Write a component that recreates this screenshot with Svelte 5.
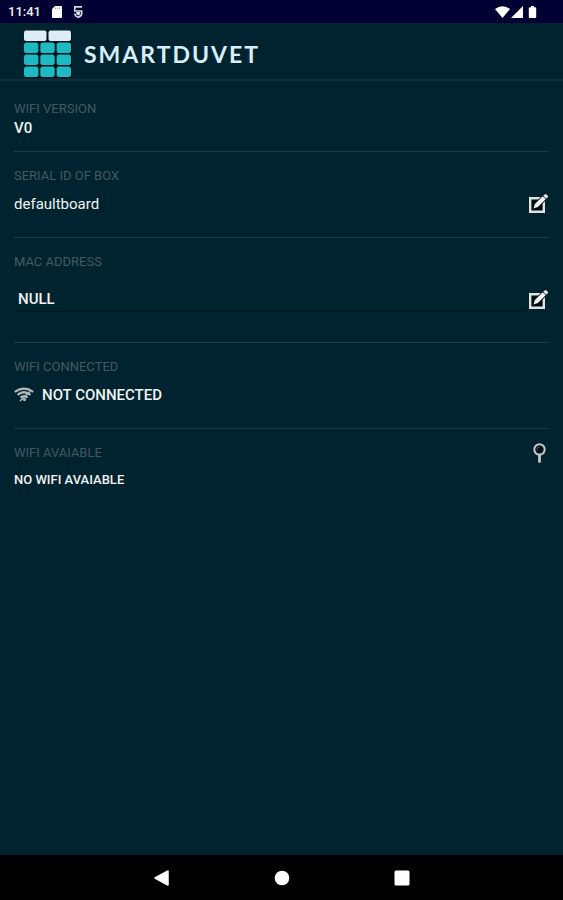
<script>
  let serial = $state('defaultboard');
  let mac = $state('NULL');
  const tiles = [0, 1, 2].flatMap((r) => [0, 1, 2].map((c) => ({ x: c * 16.3, y: 12.5 + r * 12 })));
</script>

{#snippet pencil()}
  <svg width="22" height="22" viewBox="0 0 22 22" aria-hidden="true">
    <path d="M2 4h16v16H2z" fill="#000c12" />
    <path d="M3.2 5.2h13.6v13.6H3.2z" fill="none" stroke="#e4e0e4" stroke-width="2.4" />
    <path d="M5.5 16.5l1.400-5.600 8.600-8.600 4.200 4.200-8.600 8.600z" fill="#000c12" />
    <path d="M6.500 15.500l1.400-4.400 7.800-7.800 3 3-7.800 7.800z" fill="#f2f0f2" />
    <path d="M16.200 2.800l1.400-1.400a1.400 1.400 0 0 1 2 0l1 1a1.400 1.400 0 0 1 0 2l-1.400 1.400z" fill="#e0dee2" />
  </svg>
{/snippet}

<div class="screen">
  <div class="status">
    <div class="group">
      <time>11:41</time>
      <svg width="10" height="12" viewBox="0 0 10 12" aria-hidden="true">
        <path d="M3 0h6a1 1 0 0 1 1 1v10a1 1 0 0 1-1 1H1a1 1 0 0 1-1-1V3z" fill="#fff" />
        <path d="M3.500 1.500v1.500M5.500 1.500v1.500M7.500 1.500v1.500" stroke="#8a8aa0" stroke-width=".8" />
      </svg>
      <svg width="10" height="12" viewBox="0 0 10 12" aria-hidden="true">
        <path d="M9 .9H1.800V5H8.700V8Q8.300 10.300 5.200 11.200 2 10.300 1.700 7.500" fill="none" stroke="#d8d8e4" stroke-width="1.600" />
        <path d="M3.200 6h4v2.200L5.200 9.600 3.200 8.200z" fill="#d8d8e4" />
      </svg>
    </div>
    <svg width="44" height="14" viewBox="0 0 44 14" aria-hidden="true">
      <path d="M0 4Q7.500-1.500 15 4L7.500 13z" fill="#fff" />
      <path d="M28 1v12H16z" fill="#fff" />
      <path d="M36 1h3v1.200h1.200a1 1 0 0 1 1 1V12a1 1 0 0 1-1 1h-5.400a1 1 0 0 1-1-1V3.200a1 1 0 0 1 1-1H36z" fill="#fff" />
    </svg>
  </div>

  <header>
    <svg width="48" height="48" viewBox="0 0 48 48" aria-hidden="true">
      <rect width="48" height="48" rx="3" fill="#00121a" />
      <rect x="0" y="0.500" width="22.500" height="10.500" rx="2" fill="#dcedf7" />
      <rect x="24.500" y="0.500" width="22.500" height="10.500" rx="2" fill="#dcedf7" />
      {#each tiles as t}
        <rect x={t.x} y={t.y} width="14.400" height="10.400" rx="2.500" fill="#1fb9c4" />
      {/each}
    </svg>
    <h1>SMARTDUVET</h1>
  </header>

  <main>
    <section>
      <h2>WIFI VERSION</h2>
      <div class="row version">V0</div>
    </section>
    <section>
      <h2><label for="serial">SERIAL ID OF BOX</label></h2>
      <div class="row serial">
        <input id="serial" bind:value={serial} />
        <button aria-label="Edit serial ID">{@render pencil()}</button>
      </div>
    </section>
    <section>
      <h2><label for="mac">MAC ADDRESS</label></h2>
      <div class="row mac">
        <input id="mac" class="lined" bind:value={mac} />
        <button aria-label="Edit MAC address">{@render pencil()}</button>
      </div>
    </section>
    <section>
      <h2>WIFI CONNECTED</h2>
      <div class="row connected">
        <svg width="20" height="16" viewBox="0 0 20 16" aria-hidden="true">
          <g fill="none" stroke="#b4b8ba" stroke-width="2.200">
            <path d="M.8 4.800Q10-1.600 19.200 4.800" />
            <path d="M3.600 7.900Q10 2.600 16.400 7.900" />
            <path d="M6.400 10.800Q10 7.400 13.600 10.800" />
            <path d="M16 4.500L6 14" stroke-width="1.500" />
          </g>
          <circle cx="10.500" cy="12.600" r="1.600" fill="#b4b8ba" />
        </svg>
        <span>NOT CONNECTED</span>
      </div>
    </section>
    <section>
      <div class="heading">
        <h2>WIFI AVAIABLE</h2>
        <button aria-label="Search for wifi">
          <svg width="20" height="22" viewBox="0 0 20 22" aria-hidden="true">
            <circle cx="10.500" cy="7.500" r="5.200" fill="#00141d" stroke="#c9c5c8" stroke-width="2" />
            <path d="M10.500 13v6.500" stroke="#c9c5c8" stroke-width="2.800" stroke-linecap="round" />
            <path d="M8 7.500A2.500 2.500 0 0 1 10.500 5" fill="none" stroke="#59656b" />
          </svg>
        </button>
      </div>
      <div class="row available">NO WIFI AVAIABLE</div>
    </section>
  </main>

  <nav>
    <button aria-label="Back"><svg width="16" height="18" viewBox="0 0 16 18"><path d="M14 2v14L1 9z" fill="#fff" stroke="#fff" stroke-width="1.500" stroke-linejoin="round" /></svg></button>
    <button aria-label="Home"><svg width="16" height="18" viewBox="0 0 16 18"><circle cx="8" cy="9" r="7.300" fill="#fff" /></svg></button>
    <button aria-label="Recent apps"><svg width="16" height="18" viewBox="0 0 16 18"><rect x=".5" y="1.500" width="15" height="15" rx="1.500" fill="#fff" /></svg></button>
  </nav>
</div>

<style>
  .screen {
    min-height: 100vh;
    display: flex;
    flex-direction: column;
    background: #00242f;
    color: #f2f2f2;
    font-family: Roboto, "Liberation Sans", sans-serif;
    font-size: 15px;
  }
  svg { display: block; flex: none; }
  button {
    display: block;
    padding: 0;
    border: 0;
    background: none;
    cursor: pointer;
  }
  .status {
    height: 23px;
    padding: 0 24px 0 8px;
    display: flex;
    align-items: center;
    justify-content: space-between;
    background: #000033;
  }
  .group { display: flex; align-items: center; gap: 11px; }
  time { font-size: 13px; font-weight: 500; line-height: 23px; }
  header {
    display: flex;
    align-items: center;
    gap: 12px;
    height: 58px;
    padding: 5px 24px 0;
    box-sizing: border-box;
    border-bottom: 2px solid #10323b;
  }
  h1 {
    margin: 0;
    font: 700 23px/32px Lato, "Open Sans", sans-serif;
    letter-spacing: 2px;
    color: #d8eef8;
  }
  main { flex: 1; padding: 4px 14px 0; }
  section { padding: 16px 0 13px; border-bottom: 1px solid #1f3b45; }
  section:last-child { border: 0; }
  h2 { margin: 0; font-size: 13px; line-height: 16px; font-weight: 400; color: #425963; }
  .row { display: flex; align-items: center; font-weight: 500; }
  .version { height: 21px; }
  .serial { height: 40px; }
  .mac { height: 59px; }
  .connected { height: 40px; gap: 8px; }
  .available { height: 36px; font-size: 13px; }
  input {
    flex: 1;
    min-width: 0;
    height: 24px;
    box-sizing: border-box;
    padding: 0;
    border: 0;
    outline: 0;
    background: none;
    color: inherit;
    font: inherit;
  }
  .serial input { font-weight: 400; }
  .lined { margin-left: 4px; border-bottom: 1px solid #00161f; }
  .heading { display: flex; align-items: center; justify-content: space-between; height: 16px; }
  nav {
    height: 45px;
    display: flex;
    align-items: center;
    justify-content: center;
    gap: 104px;
    background: #000;
  }
</style>
